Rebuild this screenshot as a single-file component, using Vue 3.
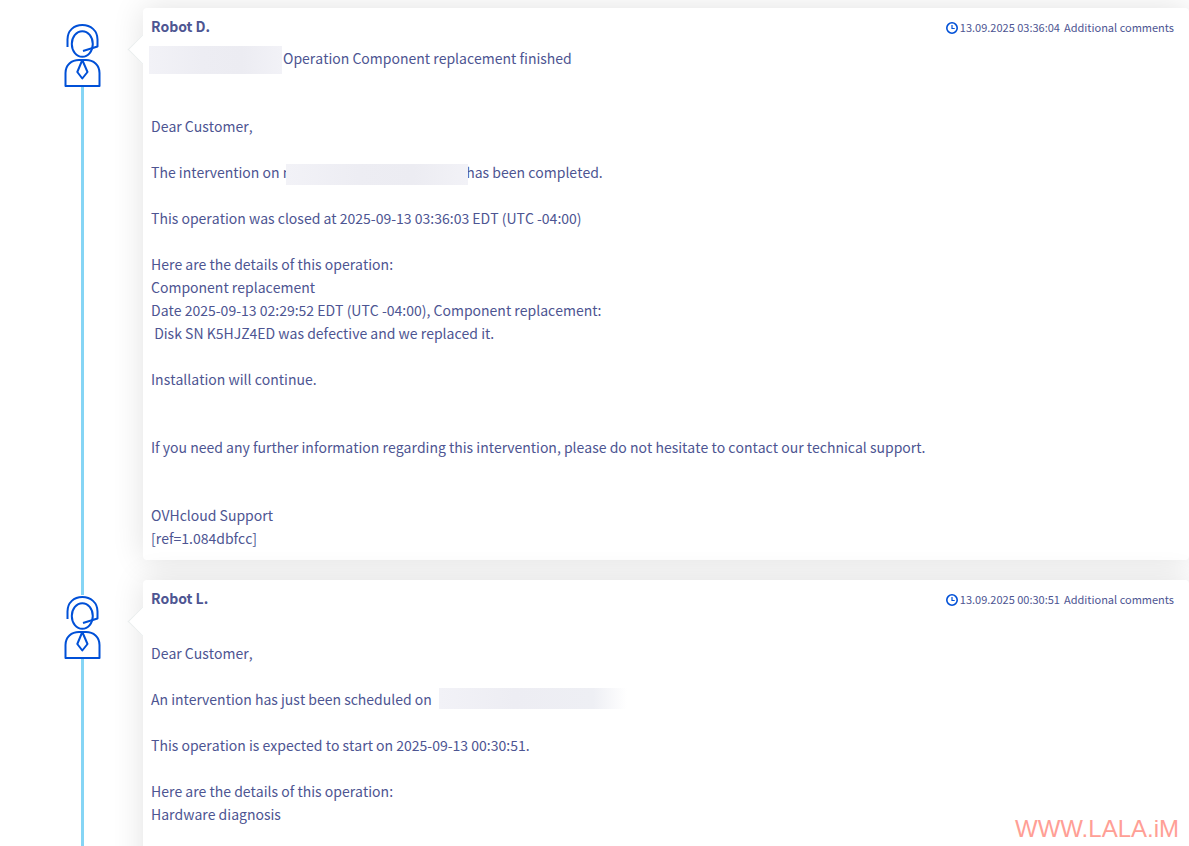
<script setup>
const messages = [
  {
    id: 1,
    author: 'Robot D.',
    date: '13.09.2025 03:36:04',
    kind: 'Additional comments',
    blocks: [
      { lines: [[{ mask: 'subject' }, 'Operation Component replacement finished']] },
      { gap: 'wide', lines: [['Dear Customer,']] },
      { gap: 'line', lines: [['The intervention on n', { mask: 'server' }, 'has been completed.']] },
      { gap: 'line', lines: [['This operation was closed at 2025-09-13 03:36:03 EDT (UTC -04:00)']] },
      {
        gap: 'line',
        lines: [
          ['Here are the details of this operation:'],
          ['Component replacement'],
          ['Date 2025-09-13 02:29:52 EDT (UTC -04:00), Component replacement:'],
          [' Disk SN K5HJZ4ED was defective and we replaced it.'],
        ],
      },
      { gap: 'line', lines: [['Installation will continue.']] },
      {
        gap: 'wide',
        lines: [['If you need any further information regarding this intervention, please do not hesitate to contact our technical support.']],
      },
      { gap: 'wide', lines: [['OVHcloud Support'], ['[ref=1.084dbfcc]']] },
    ],
  },
  {
    id: 2,
    author: 'Robot L.',
    date: '13.09.2025 00:30:51',
    kind: 'Additional comments',
    blocks: [
      { gap: 'line', lines: [['Dear Customer,']] },
      { gap: 'line', lines: [['An intervention has just been scheduled on ', { mask: 'target' }]] },
      { gap: 'line', lines: [['This operation is expected to start on 2025-09-13 00:30:51.']] },
      { gap: 'line', lines: [['Here are the details of this operation:'], ['Hardware diagnosis']] },
    ],
  },
]
</script>

<template>
  <main class="page">
    <ol class="timeline">
      <li v-for="message in messages" :key="message.id" class="entry">
        <div class="rail">
          <svg class="agent" width="40" height="66" viewBox="0 0 40 66" aria-hidden="true">
            <g fill="none" stroke="#0050d7" stroke-width="2" stroke-linejoin="round">
              <path d="M5.500 25V17.500C5.500 8.500 12 3 20.300 3S35.500 8.500 35.500 17.500V24.500L21 29" />
              <ellipse cx="20.300" cy="22" rx="10.500" ry="12.800" />
              <path d="M3.500 64V51C3.500 43 9.500 38 17 38H24C31.500 38 37.500 43 37.500 51V64Z" />
              <path d="M20.300 38L15.300 50L20.300 56.500L25.500 50Z" />
            </g>
          </svg>
        </div>
        <article class="card">
          <header class="head">
            <h2 class="author">{{ message.author }}</h2>
            <div class="meta">
              <svg class="clock" width="12" height="12" viewBox="0 0 12 12" aria-hidden="true">
                <g fill="none" stroke="#0050d7">
                  <circle cx="6" cy="6" r="5.200" stroke-width="1.600" />
                  <path d="M6 3V6.500H8.700" stroke-width="1.200" />
                </g>
              </svg>
              <time>{{ message.date }}</time>
              <span>{{ message.kind }}</span>
            </div>
          </header>
          <div class="body">
            <p v-for="(block, b) in message.blocks" :key="b" :class="block.gap">
              <span v-for="(line, l) in block.lines" :key="l" class="line"><template v-for="(part, i) in line" :key="i"><span v-if="part.mask" class="mask" :class="part.mask"></span><template v-else>{{ part }}</template></template></span>
            </p>
          </div>
        </article>
      </li>
    </ol>
    <div class="watermark">WWW.LALA.iM</div>
  </main>
</template>

<style>
body {
  margin: 0;
  background: #fff;
}
</style>

<style scoped>
.page {
  position: relative;
  height: 100vh;
  overflow: hidden;
  font-family: "Noto Sans CJK SC", "Noto Sans", sans-serif;
  font-size: 14px;
  line-height: 23px;
  color: #4d5592;
}
.timeline {
  list-style: none;
  margin: 0;
  padding: 8px 0 0;
}
.entry {
  position: relative;
  display: grid;
  grid-template-columns: 143px 1fr;
  padding-bottom: 20px;
}
.entry::before {
  content: "";
  position: absolute;
  z-index: 1;
  left: 81px;
  top: 78px;
  bottom: -15px;
  width: 3px;
  background: #85d5f5;
}
.entry:last-child::before {
  bottom: -60px;
}
.rail {
  padding: 14px 0 0 62px;
}
.agent {
  position: relative;
  z-index: 2;
  display: block;
}
.card {
  position: relative;
  min-width: 0;
  padding: 7px 15px 10px 8px;
  background: #fff;
  border-radius: 4px;
  box-shadow: 0 0 32px rgba(0, 0, 0, 0.12);
}
.entry:last-child .card {
  padding-bottom: 60px;
}
.card::before {
  content: "";
  position: absolute;
  left: -11px;
  top: 31px;
  width: 21px;
  height: 21px;
  box-sizing: border-box;
  background: #fff;
  border: solid #e9eded;
  border-width: 0 0 1px 1px;
  transform: rotate(45deg);
}
.head {
  display: flex;
  justify-content: space-between;
  align-items: flex-start;
  margin-bottom: 7px;
}
.author {
  margin: 0;
  font-size: 14px;
  line-height: 23px;
  font-weight: 700;
}
.meta {
  display: flex;
  align-items: center;
  font-size: 11px;
  line-height: 25px;
}
.clock {
  margin-right: 2px;
}
.meta time {
  margin-right: 4px;
}
.body {
  display: flow-root;
  font-kerning: none;
}
.body p {
  margin: 0;
}
.body .line {
  display: block;
  height: 23px;
  white-space: pre-wrap;
}
.body p.line {
  height: auto;
  margin-top: 23px;
  white-space: normal;
}
.body p.wide {
  margin-top: 45px;
}
.mask {
  position: relative;
  display: inline-block;
  vertical-align: middle;
  height: 21px;
  background: linear-gradient(90deg, #f2f2f7, #ededf3 40%, #ececf2 70%, #f2f2f7);
}
.subject {
  width: 133px;
  height: 28px;
  margin: -3px 1px -3px -2px;
}
.server {
  width: 182px;
  margin: 0 -2px 0 -5px;
}
.target {
  width: 188px;
  margin-left: 4px;
  vertical-align: top;
  background: linear-gradient(90deg, #f2f2f7, #ededf3 40%, #eeeff4 82%, #fff);
}
.watermark {
  position: absolute;
  right: 10px;
  bottom: 3px;
  font-family: "Liberation Sans", Arial, sans-serif;
  font-size: 24px;
  line-height: 28px;
  color: #ff9f96;
}
</style>
